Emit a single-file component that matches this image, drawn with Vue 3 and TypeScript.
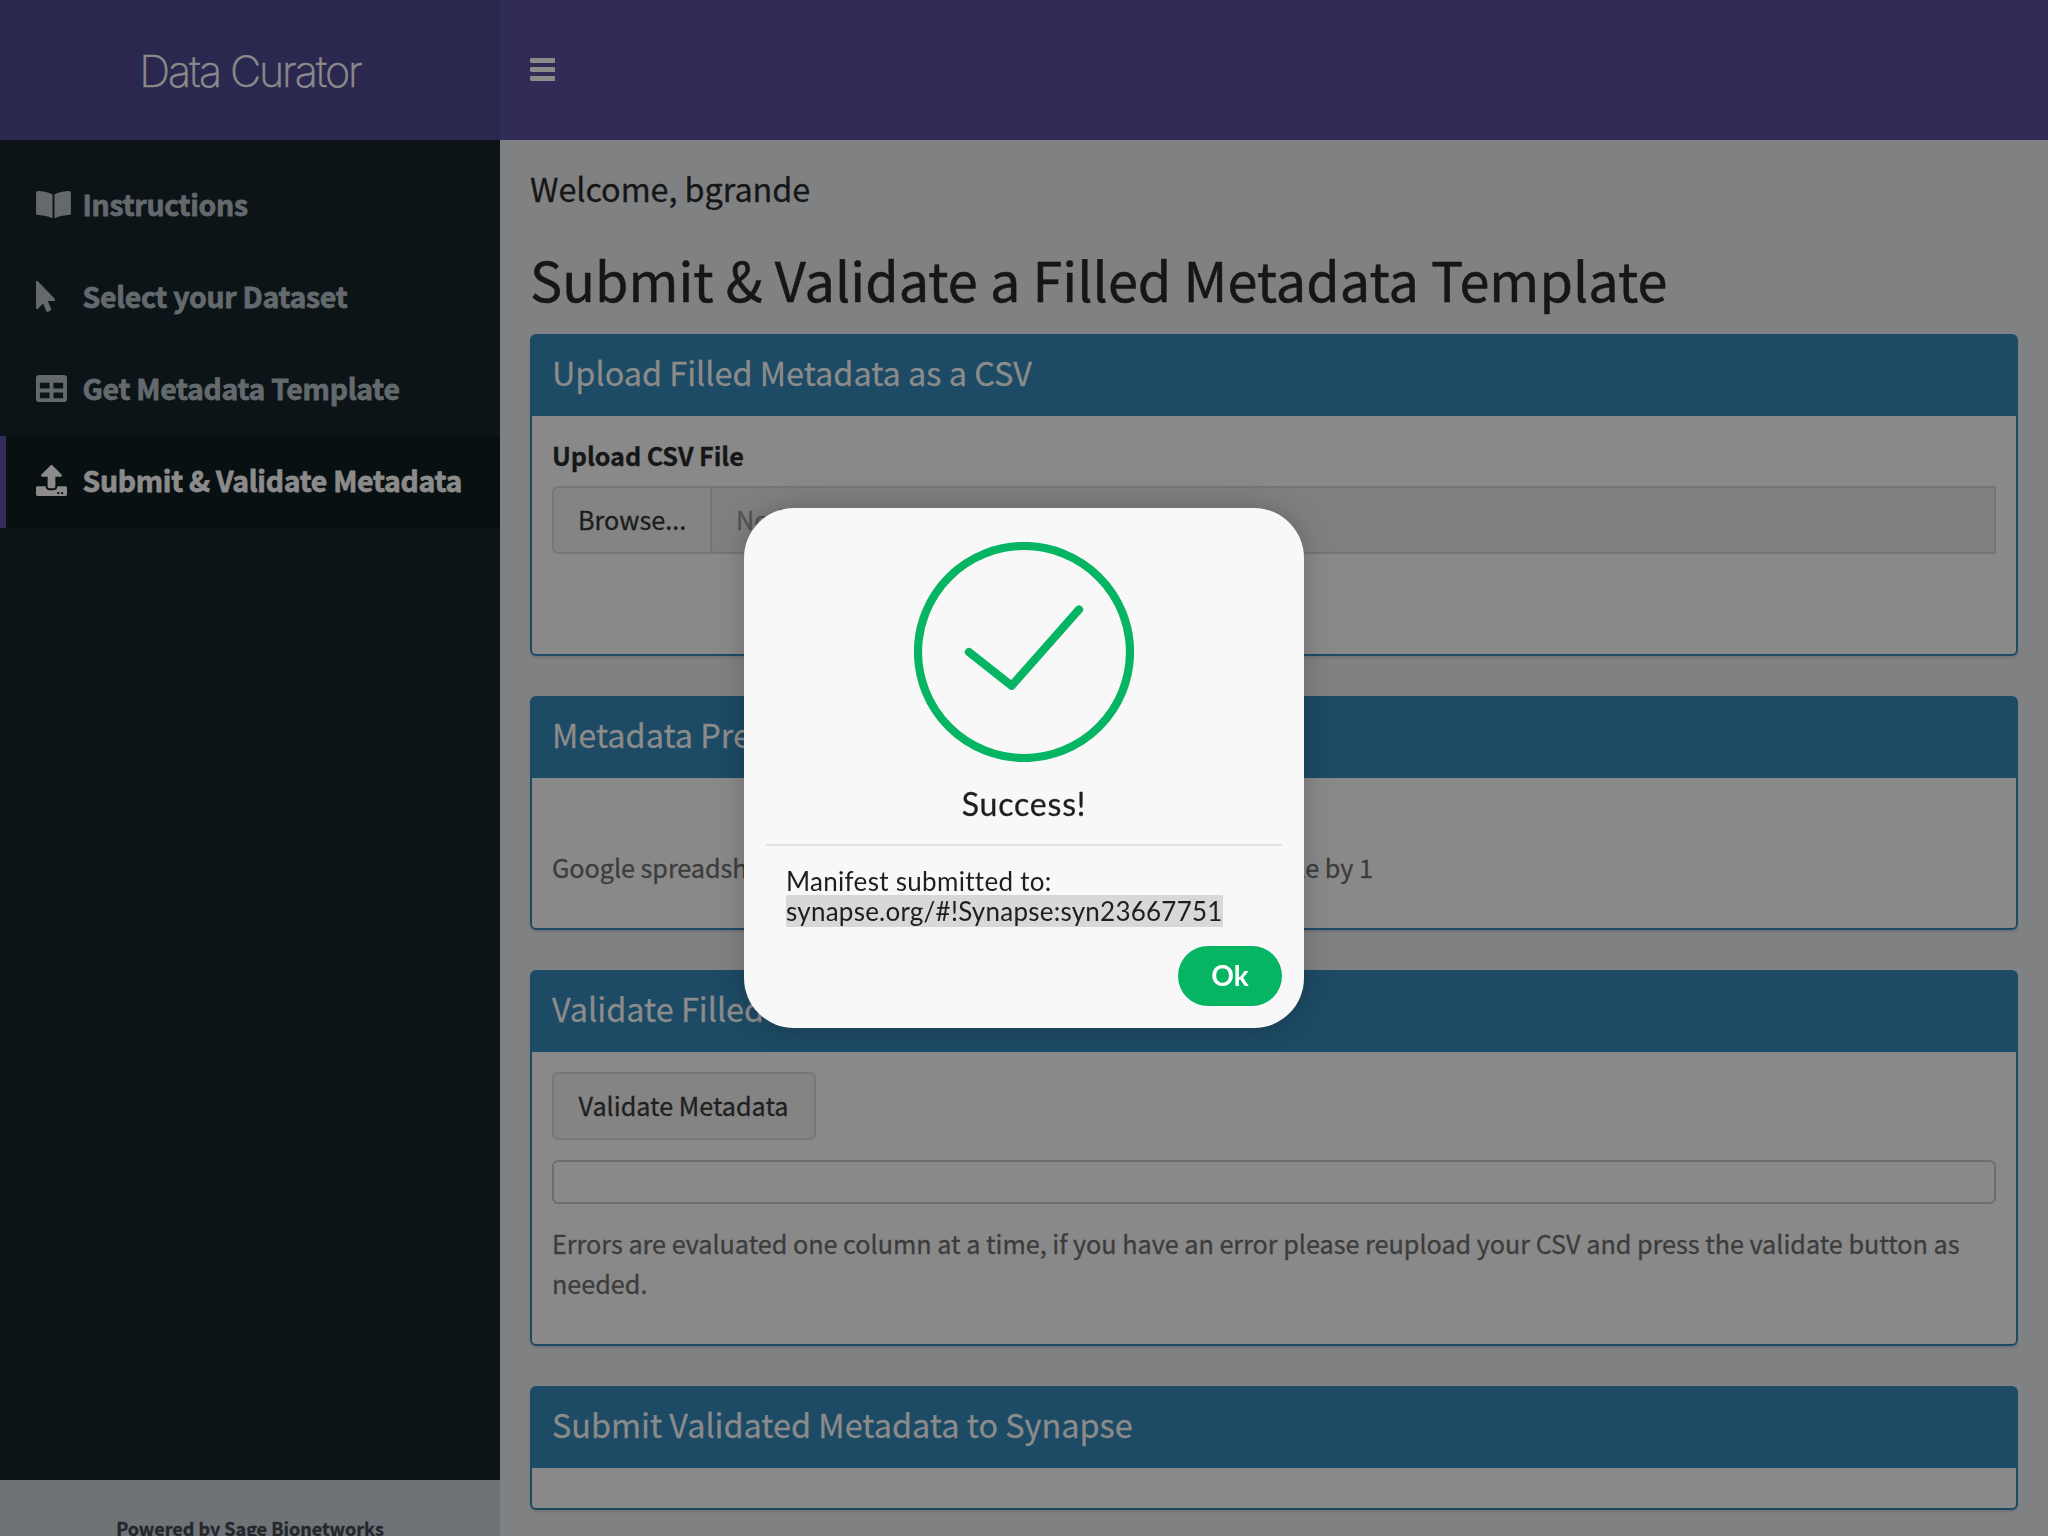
<script setup lang="ts">
interface MenuItem {
  label: string
  viewBox: string
  width: number
  path: string
  active?: boolean
}

const menu: MenuItem[] = [
  {
    label: 'Instructions',
    viewBox: '0 0 576 512',
    width: 35,
    path: 'M542.22 32.05c-54.8 3.11-163.72 14.43-230.96 55.59-4.64 2.84-7.27 7.89-7.27 13.17v363.87c0 11.55 12.63 18.85 23.28 13.49 69.18-34.82 169.23-44.32 218.7-46.92 16.89-.89 30.02-14.43 30.02-30.66V62.75c.01-17.71-15.35-31.74-33.77-30.7zM264.73 87.64C197.5 46.48 88.58 35.17 33.78 32.05 15.36 31.01 0 45.04 0 62.75V400.6c0 16.24 13.13 29.78 30.02 30.66 49.49 2.6 149.59 12.11 218.77 46.95 10.62 5.35 23.21-1.94 23.21-13.46V100.63c0-5.29-2.62-10.14-7.27-12.99z',
  },
  {
    label: 'Select your Dataset',
    viewBox: '0 0 320 512',
    width: 19.4,
    path: 'M302.189 329.126H196.105l55.831 135.993c3.889 9.428-.555 19.999-9.444 23.999l-49.165 21.427c-9.165 4-19.443-.571-23.332-9.714l-53.053-129.136-86.664 89.138C18.729 472.71 0 463.554 0 447.977V18.299C0 1.899 19.921-6.096 30.277 5.443l284.412 292.542c11.472 11.179 3.007 31.141-12.5 31.141z',
  },
  {
    label: 'Get Metadata Template',
    viewBox: '0 0 512 512',
    width: 31,
    path: 'M464 32H48C21.49 32 0 53.49 0 80v352c0 26.51 21.49 48 48 48h416c26.51 0 48-21.49 48-48V80c0-26.51-21.49-48-48-48zM224 416H64v-96h160v96zm0-160H64v-96h160v96zm224 160H288v-96h160v96zm0-160H288v-96h160v96z',
  },
  {
    label: 'Submit & Validate Metadata',
    viewBox: '0 0 512 512',
    width: 31,
    active: true,
    path: 'M296 384h-80c-13.3 0-24-10.7-24-24V192h-87.7c-17.8 0-26.7-21.5-14.1-34.1L242.3 5.7c7.5-7.5 19.8-7.5 27.3 0l152.2 152.2c12.6 12.6 3.7 34.1-14.1 34.1H320v168c0 13.3-10.7 24-24 24zm216-8v112c0 13.3-10.7 24-24 24H24c-13.3 0-24-10.7-24-24V376c0-13.3 10.7-24 24-24h136v8c0 30.9 25.1 56 56 56h80c30.9 0 56-25.1 56-56v-8h136c13.3 0 24 10.7 24 24zm-124 88c0-11-9-20-20-20s-20 9-20 20 9 20 20 20 20-9 20-20zm64 0c0-11-9-20-20-20s-20 9-20 20 9 20 20 20 20-9 20-20z',
  },
]
</script>

<template>
  <div class="app">
    <header class="top">
      <div class="logo"><span>Data Curator</span></div>
      <nav class="navbar">
        <svg class="bars" viewBox="0 0 25.5 23" width="25.5" height="23">
          <rect v-for="y in [0, 9, 18]" :key="y" x="0" :y="y" width="25.5" height="5" rx="1.4" />
        </svg>
      </nav>
    </header>

    <div class="columns">
      <aside class="sidebar">
        <ul class="menu">
          <li v-for="item in menu" :key="item.label" :class="{ active: item.active }">
            <span class="icon">
              <svg :viewBox="item.viewBox" :width="item.width" height="31"><path :d="item.path" /></svg>
            </span>
            <span class="label">{{ item.label }}</span>
          </li>
        </ul>
        <footer class="powered">Powered by Sage Bionetworks</footer>
      </aside>

      <main class="content">
        <p class="welcome">Welcome, bgrande</p>
        <h1>Submit &amp; Validate a Filled Metadata Template</h1>

        <section class="box upload">
          <h3>Upload Filled Metadata as a CSV</h3>
          <div class="body">
            <label>Upload CSV File</label>
            <div class="file">
              <span class="browse">Browse...</span>
              <span class="filename">No file selected</span>
            </div>
          </div>
        </section>

        <section class="box preview">
          <h3>Metadata Preview</h3>
          <div class="body">
            <p class="help">Google spreadsheet row numbers are incremented from this table by 1</p>
          </div>
        </section>

        <section class="box validate">
          <h3>Validate Filled Metadata</h3>
          <div class="body">
            <button class="btn">Validate Metadata</button>
            <div class="result"></div>
            <p class="help">Errors are evaluated one column at a time, if you have an error please reupload your CSV and press the validate button as needed.</p>
          </div>
        </section>

        <section class="box submit">
          <h3>Submit Validated Metadata to Synapse</h3>
          <div class="body"></div>
        </section>
      </main>
    </div>

    <div class="overlay">
      <div class="dialog">
        <svg class="check" viewBox="0 0 220 220" width="220" height="220">
          <circle cx="110" cy="110" r="106" />
          <path d="M54.9 110L97.6 143.8L165 67.5" />
        </svg>
        <h5>Success!</h5>
        <p class="message"><span class="line">Manifest submitted to:</span><br /><mark>synapse.org/#!Synapse:syn23667751</mark></p>
        <button class="ok">Ok</button>
      </div>
    </div>
  </div>
</template>

<style>
body {
  overflow: hidden;
}
</style>

<style scoped>
* {
  box-sizing: border-box;
  margin: 0;
  padding: 0;
}
.app {
  display: flex;
  flex-direction: column;
  width: 2048px;
  height: 1536px;
  overflow: hidden;
  font-family: "Noto Sans CJK SC", "Noto Sans", sans-serif;
  font-size: 25.2px;
  line-height: 40px;
  color: #1b1c1c;
  -webkit-text-stroke: 0.3px currentColor;
}
.top {
  display: flex;
  flex: none;
  height: 140px;
}
.logo {
  display: flex;
  align-items: center;
  justify-content: center;
  width: 500px;
  padding-top: 2px;
  background: #2b284f;
  color: #8b8b8b;
  font: 200 43px/60px Inter, sans-serif;
  letter-spacing: -2.1px;
  white-space: nowrap;
  -webkit-text-stroke: 0.5px currentColor;
}
.navbar {
  flex: 1;
  padding: 58px 0 0 29.5px;
  background: #302c57;
}
.bars {
  display: block;
  fill: #8b8b8b;
}
.columns {
  display: flex;
  flex: 1;
  min-height: 0;
}
.sidebar {
  display: flex;
  flex-direction: column;
  justify-content: space-between;
  width: 500px;
  background: #0c1417;
}
.menu {
  padding-top: 20px;
  list-style: none;
}
.menu li {
  display: flex;
  align-items: center;
  height: 92px;
  border-left: 6px solid transparent;
  padding-left: 30px;
  color: #63696d;
  font-size: 28.4px;
  font-weight: 700;
  letter-spacing: -0.28px;
  white-space: nowrap;
  -webkit-text-stroke: 0.8px currentColor;
}
.menu li.active {
  border-left-color: #322d5b;
  background: #091012;
  color: #8b8b8b;
}
.icon {
  width: 46.5px;
  height: 34px;
}
.icon svg {
  display: block;
  fill: currentColor;
}
.label {
  padding-bottom: 4px;
}
.powered {
  height: 56px;
  padding-top: 28px;
  background: #6f7276;
  color: #23262b;
  font-size: 18px;
  font-weight: 700;
  text-align: center;
  white-space: nowrap;
}
.content {
  flex: 1;
  min-width: 0;
  padding: 28px 30px 0;
  background: #808183;
}
.welcome {
  font-size: 32.4px;
  letter-spacing: -0.06px;
  color: #161616;
}
h1 {
  margin: 38px 0 22px;
  font-size: 54px;
  font-weight: 400;
  line-height: 66px;
  letter-spacing: 0.03px;
  color: #161616;
  white-space: nowrap;
  -webkit-text-stroke: 0.5px currentColor;
}
.box {
  margin-bottom: 40px;
  border: 2px solid #1d4a64;
  border-radius: 6px;
  background: #898989;
  box-shadow: 0 2px 2px rgba(0, 0, 0, 0.1);
}
.upload {
  height: 322px;
}
.preview {
  height: 234px;
}
.validate {
  height: 376px;
}
.submit {
  height: 124px;
}
h3 {
  height: 80px;
  padding: 16px 20px 0;
  background: #1d4a64;
  color: #8b8b8b;
  font-size: 32.4px;
  font-weight: 400;
}
.body {
  padding: 20px;
}
label {
  display: block;
  margin: -1px 0 11px;
  color: #161616;
  font-weight: 700;
  letter-spacing: -0.08px;
}
.file {
  display: flex;
  height: 68px;
  line-height: 62px;
}
.browse {
  width: 158px;
  border: 2px solid #777777;
  border-right: 0;
  border-radius: 6px 0 0 6px;
  background: #848484;
  padding-left: 24px;
}
.filename {
  flex: 1;
  border: 2px solid #717478;
  background: #7f7f7f;
  padding-left: 24px;
  color: #525354;
}
.help {
  color: #3c3c3c;
  letter-spacing: -0.01px;
}
.preview .help {
  padding-top: 49px;
  letter-spacing: -0.04px;
}
.btn {
  display: block;
  width: 264px;
  height: 68px;
  border: 2px solid #777777;
  border-radius: 6px;
  background: #848484;
  padding: 0 1px 2px 0;
  color: #1e2020;
  font: inherit;
  line-height: 62px;
  white-space: nowrap;
}
.result {
  height: 44px;
  margin: 20px 0 19px;
  border: 2px solid #6d6d6d;
  border-radius: 6px;
}
.overlay {
  position: fixed;
  inset: 0;
  display: flex;
  align-items: center;
  justify-content: center;
}
.dialog {
  display: flex;
  flex-direction: column;
  width: 560px;
  height: 520px;
  padding: 34px 22px 22px;
  border-radius: 50px;
  background: #f8f8f8;
  box-shadow: 0 0 28px rgba(0, 0, 0, 0.2);
  color: #1e1e1e;
  font-family: Lato, sans-serif;
  -webkit-text-stroke: 0;
}
.check {
  align-self: center;
  flex: none;
  fill: none;
  stroke: #05b563;
  stroke-width: 8.2;
  stroke-linecap: round;
  stroke-linejoin: round;
}
h5 {
  height: 84px;
  padding-top: 22px;
  border-bottom: 2px solid #e2e2e2;
  font-size: 32px;
  font-weight: 400;
  letter-spacing: 0.8px;
  text-align: center;
  -webkit-text-stroke: 0.3px currentColor;
}
.message {
  height: 100px;
  padding: 20px 20px 0;
  font-size: 26px;
  line-height: 30px;
  white-space: nowrap;
}
.line {
  letter-spacing: 0.3px;
}
mark {
  background: #d8d8d8;
  color: inherit;
  letter-spacing: 0.24px;
}
.ok {
  align-self: flex-end;
  width: 104px;
  height: 60px;
  border: 0;
  border-radius: 30px;
  background: #05b563;
  color: #fff;
  font: 700 28px/58px Lato, sans-serif;
  padding-bottom: 2px;
}
</style>
